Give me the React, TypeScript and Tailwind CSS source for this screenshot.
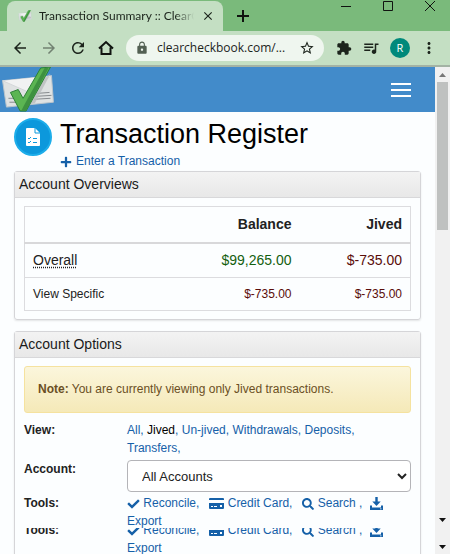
import { FaCheck, FaPlus, FaSearch } from "react-icons/fa";
import {
  MdArrowBack,
  MdArrowForward,
  MdClose,
  MdExtension,
  MdLock,
  MdMoreVert,
  MdQueueMusic,
  MdRefresh,
  MdStarBorder,
} from "react-icons/md";

const views = ["All", "Jived", "Un-jived", "Withdrawals", "Deposits", "Transfers"];

function CheckLogo({ className }: { className: string }) {
  return (
    <svg viewBox="0 0 56 46" className={className} aria-hidden="true">
      <path d="M2 14 L52 9 L54 36 L6 41 Z" fill="#dfe2e2" stroke="#b9c4cb" />
      <path d="M2 14 L27 25 L52 9" fill="#f1f2f2" stroke="#d3d6d8" />
      <path d="M8 32h8M9 36h8M37 27l13-1M36 30l16-1M34 33l17-1" stroke="#85898c" strokeWidth="1" />
      <path d="M51 7 L45 11 L29 38 L35 37 Z" fill="#b9bdbe" opacity="0.8" />
      <path d="M10 26 L18 23 L23 32 L41 1 L51 0 L26 45 L20 45 Z" fill="#5bb552" stroke="#2c7f35" />
      <path d="M49 1 L26 45 L21 45 L24 39 L45 1 Z" fill="#3e9140" />
    </svg>
  );
}

function HomeIcon() {
  return (
    <svg viewBox="0 0 16 16" className="h-4 w-4" fill="none" stroke="#101410" strokeWidth="2" aria-hidden="true">
      <path d="M1 8.5 L8 2 L15 8.5 M3.5 7.5 V14 H12.5 V7.5" />
    </svg>
  );
}

function CardIcon() {
  return (
    <svg viewBox="0 0 15 12" className="inline h-3 w-[15px]" fill="#1560a8" aria-hidden="true">
      <path d="M1 0h13a1 1 0 0 1 1 1v1H0V1a1 1 0 0 1 1-1z" />
      <path fillRule="evenodd" d="M0 5h15v5a1 1 0 0 1-1 1H1a1 1 0 0 1-1-1zM2 8v1h2V8zM5 8v1h3V8zM11 7v2h2V7z" />
    </svg>
  );
}

function SaveIcon() {
  return (
    <svg viewBox="0 0 13 13" className="inline h-[13px] w-[13px]" fill="#1560a8" aria-hidden="true">
      <path d="M5.300 0h2.400v4.500h3L6.500 9 2.300 4.500h3z" />
      <path fillRule="evenodd" d="M0 8.500h2v2h9v-2h2V13H0zM10 11.500v.7h1.500v-.7z" />
    </svg>
  );
}

function Chrome() {
  return (
    <header className="font-['Open_Sans',sans-serif] text-[#1c241c]">
      <div className="flex h-[31px] bg-[#7aba7b] pl-[7px] pt-px">
        <div className="flex w-[216px] items-center gap-[7px] rounded-t-lg bg-[#c4dfc3] pl-[11px] pr-2">
          <CheckLogo className="h-3 w-[14px] shrink-0" />
          <span className="min-w-0 flex-1 overflow-hidden whitespace-nowrap font-['Lato',sans-serif] text-[12px] [mask-image:linear-gradient(to_right,black_88%,transparent)]">
            Transaction Summary :: ClearCheckbook
          </span>
          <button aria-label="Close tab">
            <MdClose className="h-[14px] w-[14px]" />
          </button>
        </div>
        <button aria-label="New tab" className="ml-3">
          <svg viewBox="0 0 12 12" className="h-3 w-4" stroke="#101410" strokeWidth="2">
            <path d="M6 0v12M0 6h12" />
          </svg>
        </button>
        <div className="ml-auto flex items-start gap-8 pr-[15px]">
          <button aria-label="Minimize">
            <svg viewBox="0 0 10 10" className="h-[10px] w-[10px]" stroke="#101410">
              <path d="M0 5.500h10" />
            </svg>
          </button>
          <button aria-label="Maximize">
            <svg viewBox="0 0 10 10" className="h-[10px] w-[10px]" fill="none" stroke="#101410">
              <path d="M.5 .5h9v9h-9z" />
            </svg>
          </button>
          <button aria-label="Close">
            <svg viewBox="0 0 10 10" className="h-[10px] w-[10px]" stroke="#101410">
              <path d="M0 0l10 10M10 0L0 10" />
            </svg>
          </button>
        </div>
      </div>
      <div className="flex h-9 items-center border-b-2 border-[#a3b3a4] bg-[#c4dfc3] pl-[11px] pr-3">
        <div className="flex items-center gap-[11px]">
          <button aria-label="Back"><MdArrowBack className="h-[18px] w-[18px]" /></button>
          <button aria-label="Forward"><MdArrowForward className="h-[18px] w-[18px] text-[#728272]" /></button>
          <button aria-label="Reload"><MdRefresh className="h-[18px] w-[18px]" /></button>
          <button aria-label="Home"><HomeIcon /></button>
        </div>
        <div className="ml-3 flex h-[26px] min-w-0 flex-1 items-center rounded-full bg-[#eff6ef] px-[9px]">
          <MdLock className="h-[14px] w-[14px] shrink-0 text-[#536053]" />
          <input
            aria-label="Address"
            defaultValue="clearcheckbook.com/..."
            className="ml-2 w-full min-w-0 bg-transparent text-[12px] outline-none"
          />
          <button aria-label="Bookmark"><MdStarBorder className="h-4 w-4" /></button>
        </div>
        <div className="ml-3 flex items-center gap-[10px]">
          <button aria-label="Extensions"><MdExtension className="h-4 w-4" /></button>
          <button aria-label="Media"><MdQueueMusic className="h-[18px] w-[18px]" /></button>
          <button className="h-5 w-5 rounded-full bg-[#00897b] text-[11px] leading-5 text-white">R</button>
          <button aria-label="Menu"><MdMoreVert className="h-[18px] w-[18px]" /></button>
        </div>
      </div>
    </header>
  );
}

function Panel({ title, children }: { title: string; children: React.ReactNode }) {
  return (
    <section className="rounded-[3px] border border-[#d5d5d8] shadow-[0_1px_2px_rgba(0,0,0,0.1)]">
      <h2 className="h-[26px] border-b border-[#d8d8da] bg-linear-to-b from-[#f3f3f3] to-[#e8e8e8] pl-1 text-[14px] leading-[25px] text-[#1a1a1a]">
        {title}
      </h2>
      <div className="px-[9px] py-2">{children}</div>
    </section>
  );
}

function Tools() {
  return (
    <div className="flex leading-[18px]">
      <div className="w-[103px] shrink-0 font-bold">Tools:</div>
      <div className="text-[#1560a8]">
        <a href="#reconcile"><FaCheck className="inline h-3 w-[13px]" /> Reconcile</a>,
        <a href="#card" className="ml-[10px]"><CardIcon /> Credit Card</a>,
        <a href="#search" className="ml-[10px]"><FaSearch className="inline h-3 w-3" /> Search</a> ,
        <a href="#export"><span className="ml-2"><SaveIcon /></span> Export</a>
      </div>
    </div>
  );
}

function Scrollbar() {
  return (
    <div className="flex w-[15px] shrink-0 flex-col items-center bg-[#f1f1f1]" aria-hidden="true">
      <svg viewBox="0 0 15 15" className="h-[15px] w-[15px]" fill="#777"><path d="M4 10h7L7.500 6z" /></svg>
      <div className="h-[148px] w-[11px] bg-[#bfc1c0]" />
      <svg viewBox="0 0 15 15" className="mb-3 mt-auto h-[15px] w-[15px]" fill="#111"><path d="M4 6h7L7.500 10z" /></svg>
      <svg viewBox="0 0 15 15" className="h-[15px] w-[15px]" fill="#111"><path d="M4 6h7L7.500 10z" /></svg>
    </div>
  );
}

export default function App() {
  return (
    <div className="flex h-screen flex-col overflow-hidden bg-[#fcfeff] font-['Liberation_Sans',Arial,sans-serif] text-[12px] text-[#222]">
      <Chrome />
      <div className="flex min-h-0 flex-1">
        <main className="min-w-0 flex-1 overflow-hidden">
          <nav className="flex h-[45px] items-center justify-between bg-[#428bca] pr-6">
            <a href="#home" aria-label="Home"><CheckLogo className="h-[45px] w-14" /></a>
            <button aria-label="Menu" className="flex flex-col gap-1">
              <span className="h-[2px] w-5 bg-white" />
              <span className="h-[2px] w-5 bg-white" />
              <span className="h-[2px] w-5 bg-white" />
            </button>
          </nav>

          <div className="px-[14px] pt-1">
            <div className="flex gap-2">
              <div className="mt-[2px] flex h-[38px] w-[38px] shrink-0 items-center justify-center rounded-full border-2 border-[#1cadea] bg-[#0c98dc]">
                <svg viewBox="0 0 14 18" className="h-[18px] w-[14px]" aria-hidden="true">
                  <path d="M1 0h8l5 5v12a1 1 0 0 1-1 1H1a1 1 0 0 1-1-1V1a1 1 0 0 1 1-1z" fill="#fff" />
                  <path d="M9 0v5h5" fill="none" stroke="#0c98dc" />
                  <path d="M2 10l1 1 2-2M2 14l1 1 2-2M7 10.500h4M7 14.500h4" fill="none" stroke="#0c98dc" />
                </svg>
              </div>
              <div>
                <h1 className="text-[27px] leading-9 text-black">Transaction Register</h1>
                <a href="#new" className="flex items-center gap-1 leading-[19px] text-[#1560a8]">
                  <FaPlus className="h-3 w-3" /> Enter a Transaction
                </a>
              </div>
            </div>

            <div className="flex flex-col gap-[11px]">
              <Panel title="Account Overviews">
                <table className="w-full border border-[#dcdcdf] text-right">
                  <thead>
                    <tr className="h-9 border-b-2 border-[#d8d8da] text-[14px]">
                      <th />
                      <th className="px-2 font-bold">Balance</th>
                      <th className="w-[111px] px-2 font-bold">Jived</th>
                    </tr>
                  </thead>
                  <tbody>
                    <tr className="h-[35px] border-b border-[#dcdcdf] text-[14px]">
                      <td className="px-2 text-left">
                        <abbr title="All accounts" className="underline decoration-dotted underline-offset-2">Overall</abbr>
                      </td>
                      <td className="px-2 text-[#14600f]">$99,265.00</td>
                      <td className="px-2 text-[#5a0d0a]">$-735.00</td>
                    </tr>
                    <tr className="h-[33px]">
                      <td className="px-2 text-left">View Specific</td>
                      <td className="px-2 text-[#5a0d0a]">$-735.00</td>
                      <td className="px-2 text-[#5a0d0a]">$-735.00</td>
                    </tr>
                  </tbody>
                </table>
              </Panel>

              <Panel title="Account Options">
                <div className="rounded-[3px] border border-[#f5e29f] bg-linear-to-b from-[#fbf6dc] to-[#f5e9b8] p-[13px] leading-[19px] text-[#6b4f24]">
                  <b>Note:</b> You are currently viewing only Jived transactions.
                </div>
                <div className="mt-2 flex leading-[18px]">
                  <div className="w-[103px] shrink-0 font-bold">View:</div>
                  <div className="text-[#1560a8]">
                    {views.map((view) => (
                      <span key={view}>
                        <a href={`#${view}`} className={view === "Jived" ? "text-black" : ""}>{view}</a>,{" "}
                      </span>
                    ))}
                  </div>
                </div>
                <div className="mt-[3px] flex">
                  <label htmlFor="account" className="w-[103px] shrink-0 font-bold leading-[18px]">Account:</label>
                  <select
                    id="account"
                    className="h-8 min-w-0 flex-1 rounded-[4px] border border-[#b4b4b8] bg-white pl-[10px] text-[13px]"
                  >
                    <option>All Accounts</option>
                  </select>
                </div>
                <div className="mt-[2px] h-[34px]">
                  <Tools />
                </div>
                <div className="overflow-hidden">
                  <div className="-mt-[7px]">
                    <Tools />
                  </div>
                </div>
              </Panel>
            </div>
          </div>
        </main>
        <Scrollbar />
      </div>
    </div>
  );
}
